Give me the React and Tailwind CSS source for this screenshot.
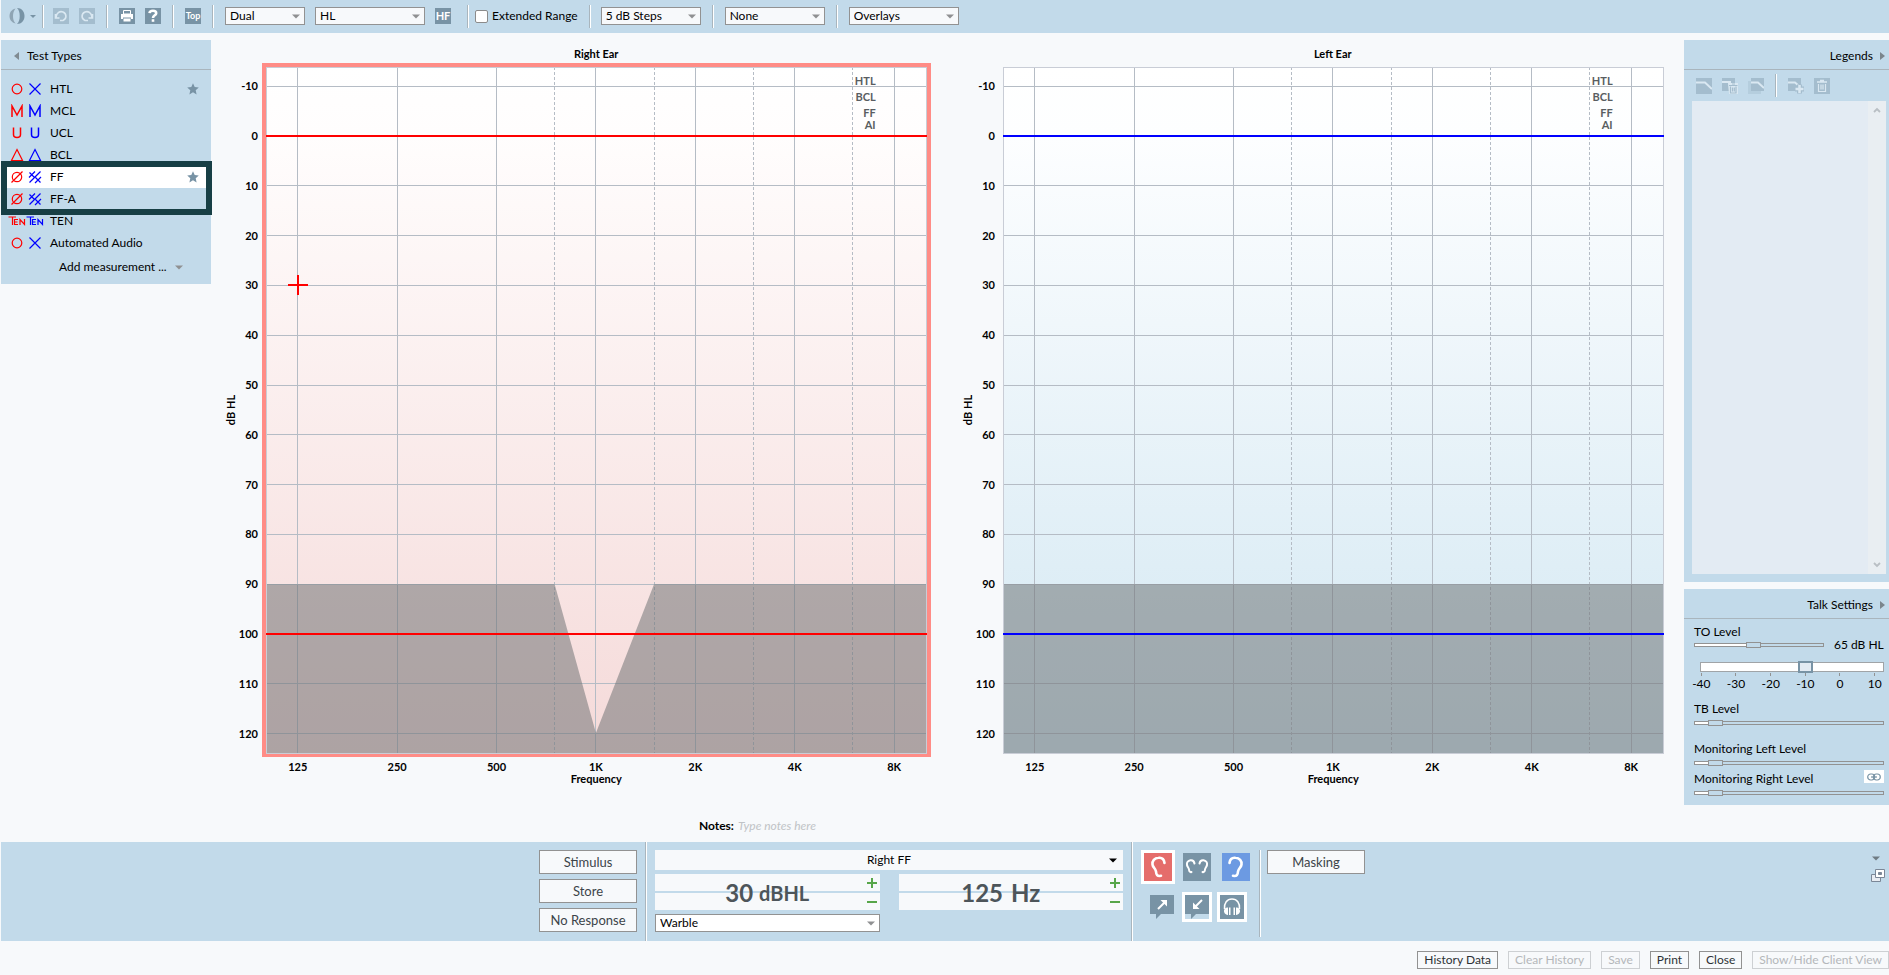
import React from "react";

const FREQS = ["125", "250", "500", "1K", "2K", "4K", "8K"];
const HALF_OCTAVES = [2.585, 3.585, 4.585, 5.585];
const LEVELS = [-10, 0, 10, 20, 30, 40, 50, 60, 70, 80, 90, 100, 110, 120];
const fx = (i) => `${4.8 + i * 15.05}%`;
const ly = (v) => `${2.8 + ((v + 10) / 10) * 7.26}%`;

function Divider() {
  return <div className="h-[23px] w-[2px] border-l border-r border-l-[#a9b5bd] border-r-white" />;
}

function Caret({ className = "" }) {
  return (
    <svg className={className} width="8" height="5" viewBox="0 0 8 5" aria-hidden="true">
      <path d="M0 0.5H8L4 4.5Z" fill="currentColor" />
    </svg>
  );
}

function Select({ label, value, className, box = "bg-[#f7f9fb]" }) {
  return (
    <div className={`relative ${className}`}>
      <select
        aria-label={label}
        defaultValue={value}
        className={`block h-[18px] w-full appearance-none border border-[#929292] pl-1 text-xs leading-4 text-black ${box}`}
      >
        <option>{value}</option>
      </select>
      <Caret className="pointer-events-none absolute top-[7px] right-[5px] text-[#8f9092]" />
    </div>
  );
}

function Tile({ label, faded, children }) {
  return (
    <button aria-label={label} className={`flex h-4 w-4 items-center justify-center bg-[#7893a5] ${faded ? "opacity-40" : ""}`}>
      {children}
    </button>
  );
}

function Toolbar() {
  return (
    <header className="ml-px flex h-[33px] items-center bg-[#c2daea] pb-px">
      <button aria-label="Module" className="ml-2 flex items-center gap-1 text-[#7893a5]">
        <svg width="17" height="16" viewBox="0 0 17 16" aria-hidden="true">
          <path d="M6.5 0.5C2.5 1.5 0.5 4.5 0.5 8S2.5 14.5 6.5 15.5C4.5 13 4 11 4 8S4.800 3 6.5 0.5Z" fill="#8fa5b4" />
          <path d="M8 0C12.5 0 15.5 3.5 15.5 8S12.5 16 8 16C10 14 10.7 11.5 10.7 8S10 2 8 0Z" fill="#7893a5" />
        </svg>
        <Caret className="w-[6px]" />
      </button>
      <div className="ml-[6px]"><Divider /></div>
      <div className="ml-[9px] flex gap-[10px]">
        <Tile label="Undo" faded>
          <svg width="16" height="16" viewBox="0 0 16 16" fill="none" stroke="#fff" strokeWidth="1.6" aria-hidden="true">
            <path d="M2.5 6V10H6.5M3 9.500C3.500 4.500 7 2.800 10 4C14 5.700 13.800 11 10 12.500H7" />
          </svg>
        </Tile>
        <Tile label="Redo" faded>
          <svg width="16" height="16" viewBox="0 0 16 16" fill="none" stroke="#fff" strokeWidth="1.6" aria-hidden="true">
            <path d="M13.5 6V10H9.5M13 9.500C12.500 4.500 9 2.800 6 4C2 5.700 2.200 11 6 12.500H9" />
          </svg>
        </Tile>
      </div>
      <div className="ml-[11px]"><Divider /></div>
      <div className="ml-[11px] flex gap-[10px]">
        <Tile label="Print">
          <svg width="16" height="16" viewBox="0 0 16 16" aria-hidden="true">
            <path d="M4.5 2.5H11.5V6H4.5Z" fill="#7893a5" stroke="#fff" />
            <path d="M2 6H14V11H12V9.5H4V11H2Z" fill="#fff" />
            <path d="M4.5 10.500V13.500H11.5V10.500Z" fill="#fff" />
          </svg>
        </Tile>
        <Tile label="Help">
          <svg width="16" height="16" viewBox="0 0 16 16" fill="none" stroke="#fff" strokeWidth="2.600" aria-hidden="true">
            <path d="M4.5 5.2C4.8 2 11.2 2 11.2 5.200C11.2 7.400 8 7.200 8 10" />
            <path d="M8 11.200V13.800" />
          </svg>
        </Tile>
      </div>
      <div className="ml-[11px]"><Divider /></div>
      <button className="ml-[11px] flex h-4 w-4 items-center justify-center overflow-hidden bg-[#7893a5] text-[9px] font-bold text-white">Top</button>
      <div className="ml-[11px]"><Divider /></div>
      <Select label="View" value="Dual" className="ml-[11px] w-20" />
      <Select label="Scale" value="HL" className="ml-[10px] w-[110px]" />
      <button className="ml-[10px] flex h-4 w-4 items-center justify-center bg-[#7893a5] text-[11px] font-bold text-white">HF</button>
      <div className="ml-[16px]"><Divider /></div>
      <label className="ml-[6px] flex items-center gap-1 text-xs">
        <input type="checkbox" className="h-[13px] w-[13px] appearance-none rounded-[2px] border border-[#8b8b8b] bg-white" />
        Extended Range
      </label>
      <div className="ml-[11px]"><Divider /></div>
      <Select label="Step size" value="5 dB Steps" className="ml-[10px] w-[100px]" />
      <div className="ml-[11px]"><Divider /></div>
      <Select label="Filter" value="None" className="ml-[11px] w-[100px]" />
      <div className="ml-[11px]"><Divider /></div>
      <Select label="Overlays" value="Overlays" className="ml-[11px] w-[110px]" />
    </header>
  );
}

const SHAPES = {
  circle: <circle cx="8" cy="7" r="4.8" />,
  cross: <path d="M2.5 1.500L13.5 12.5M13.5 1.500L2.5 12.5" />,
  m: <path d="M3 13V2L8 11L13 2V13" strokeWidth="1.5" />,
  u: <path d="M4.5 1.5V8.5C4.5 12.5 11.5 12.5 11.5 8.5V1.5" strokeWidth="1.5" />,
  triangle: <path d="M8 1.5L13.5 12.5H2.5Z" />,
  slashed: (
    <>
      <circle cx="8" cy="7" r="4.700" />
      <path d="M2.5 12.5L13.5 1.5" />
    </>
  ),
  hatch: (
    <path d="M2.5 12.5L13.5 1.5M2.5 2.5L7.5 7.5M8 1.5L2 7.5M8.500 7.500L13.500 12.500M14 7L8 13" />
  ),
};

function Mark({ shape, color }) {
  if (shape === "ten") {
    return (
      <svg width="18" height="14" viewBox="0 0 18 14" fill="none" stroke={color} strokeWidth="1.2" overflow="visible" aria-hidden="true">
        <path d="M0.500 3H8M4.500 3V11M10 5.5H6.500V10.5H10M6.500 8H9.500M12 11V5.5L16.500 10.5V5" />
      </svg>
    );
  }
  return (
    <svg width="18" height="14" viewBox="-1 0 18 14" fill="none" stroke={color} strokeWidth="1.2" aria-hidden="true">
      {SHAPES[shape]}
    </svg>
  );
}

const TESTS = [
  ["HTL", "circle", "cross", true],
  ["MCL", "m", "m"],
  ["UCL", "u", "u"],
  ["BCL", "triangle", "triangle"],
  ["FF", "slashed", "hatch", true],
  ["FF-A", "slashed", "hatch"],
  ["TEN", "ten", "ten"],
  ["Automated Audio", "circle", "cross"],
];

function TestTypes() {
  return (
    <aside className="relative ml-px h-[244px] w-[210px] shrink-0 bg-[#c2daea] text-xs">
      <h2 className="flex h-[30px] items-center gap-2 border-b border-[#a9b5bd] pt-[2px] pl-[13px]">
        <svg width="5" height="8" viewBox="0 0 5 8" aria-hidden="true"><path d="M5 0V8L0 4Z" fill="#808b92" /></svg>
        Test Types
      </h2>
      <ul className="pt-[8px]">
        {TESTS.map(([name, right, left, starred]) => (
          <li key={name}>
            <button className={`flex h-[22px] w-full items-center pl-[7px] text-left ${name === "FF" ? "bg-white" : ""}`}>
              <Mark shape={right} color="#ff0000" />
              <Mark shape={left} color="#0000ff" />
              <span className="ml-[6px] flex-1">{name}</span>
              {starred && (
                <svg className="mr-3" width="12" height="12" viewBox="0 0 12 12" aria-hidden="true">
                  <path d="M6 0.3L7.7 4.1L11.8 4.5L8.7 7.3L9.6 11.5L6 9.3L2.4 11.5L3.3 7.3L0.2 4.5L4.3 4.1Z" fill="#7893a5" />
                </svg>
              )}
            </button>
          </li>
        ))}
      </ul>
      <button className="ml-[58px] flex h-[26px] items-center gap-2">
        Add measurement ...
        <Caret className="text-[#8f9092]" />
      </button>
      <div className="pointer-events-none absolute top-[121px] left-0 h-[54px] w-[211px] border-[6px] border-[#173f45]" />
    </aside>
  );
}

function Audiogram({ title, side }) {
  const isRight = side === "right";
  const line = isRight ? "#ff0000" : "#0000ff";
  return (
    <section className="flex min-w-0 flex-1 flex-col pr-[21px] pl-[55px]">
      <h2 className="h-[27px] pt-[6px] text-center text-[11px] leading-4 font-bold">{title}</h2>
      <div className={`relative flex-1 ${isRight ? "outline-4 outline-[#ff8c86]" : ""}`}>
        <svg className="absolute inset-0 h-full w-full overflow-visible" role="img" aria-label={`${title} audiogram`}>
          <defs>
            <linearGradient id={`fill-${side}`} x1="0" y1="0" x2="0" y2="1">
              <stop offset="0" stopColor="#ffffff" />
              <stop offset="0.1" stopColor={isRight ? "#fffdfd" : "#fdfeff"} />
              <stop offset="1" stopColor={isRight ? "#f5dad9" : "#d2e7f2"} />
            </linearGradient>
          </defs>
          <rect width="100%" height="100%" fill={`url(#fill-${side})`} />
          <g stroke="#b5bcc5" shapeRendering="crispEdges">
            {LEVELS.map((v) => <line key={v} x1="0" x2="100%" y1={ly(v)} y2={ly(v)} />)}
            {FREQS.map((f, i) => <line key={f} x1={fx(i)} x2={fx(i)} y1="0" y2="100%" />)}
            {HALF_OCTAVES.map((o) => <line key={o} x1={fx(o)} x2={fx(o)} y1="0" y2="100%" strokeDasharray="3 2" />)}
          </g>
          <svg width="100%" height="100%" viewBox="0 0 100 100" preserveAspectRatio="none">
            <path
              d={isRight ? "M0 75.4H43.7L49.95 97.1L58.75 75.4H100V100H0Z" : "M0 75.4H100V100H0Z"}
              fill="#6e7274"
              fillOpacity="0.53"
            />
          </svg>
          <rect width="100%" height="100%" fill="none" stroke="#c9cdd6" shapeRendering="crispEdges" />
          <g stroke={line} strokeWidth="2" shapeRendering="crispEdges">
            <line x1="0" x2="100%" y1={ly(0)} y2={ly(0)} />
            <line x1="0" x2="100%" y1={ly(100)} y2={ly(100)} />
          </g>
          {isRight && (
            <svg x={fx(0)} y={ly(30)} overflow="visible">
              <path d="M-10 0H10M0 -10V10" stroke="#ff0000" strokeWidth="2" shapeRendering="crispEdges" />
            </svg>
          )}
          <g className="text-[11px] font-bold" textAnchor="end">
            {LEVELS.map((v) => <text key={v} x="-8" y={ly(v)} dy="4">{v}</text>)}
          </g>
          <g className="text-[11px] font-bold" textAnchor="middle">
            {FREQS.map((f, i) => <text key={f} x={fx(i)} y="100%" dy="18">{f}</text>)}
            <text x="50%" y="100%" dy="30">Frequency</text>
            <svg x="-31" y="50%" overflow="visible"><text transform="rotate(-90)">dB HL</text></svg>
          </g>
          <g className="text-[11px] font-bold" fill="#595d61" textAnchor="end">
            <text x="92.3%" y="18">HTL</text>
            <text x="92.3%" y="34">BCL</text>
            <text x="92.3%" y="50">FF</text>
            <text x="92.3%" y="62">AI</text>
          </g>
        </svg>
      </div>
      <div className="h-[52px]" />
    </section>
  );
}

function PanelTitle({ children }) {
  return (
    <h2 className="flex h-[30px] items-center justify-end gap-[7px] border-b border-[#a9b5bd] pt-[2px] pr-1">
      {children}
      <svg width="5" height="8" viewBox="0 0 5 8" aria-hidden="true"><path d="M0 0V8L5 4Z" fill="#7b858c" /></svg>
    </h2>
  );
}

function ThinSlider({ label, value, className = "" }) {
  return (
    <div className={`relative h-[6px] ${className}`}>
      <div className="absolute inset-x-0 top-[1px] h-1 border border-[#929292]">
        <div className="h-full bg-white" style={{ width: `${value}%` }} />
      </div>
      <input
        type="range"
        aria-label={label}
        defaultValue={value}
        className="absolute inset-0 h-[6px] w-full appearance-none bg-transparent [&::-webkit-slider-thumb]:h-[6px] [&::-webkit-slider-thumb]:w-[15px] [&::-webkit-slider-thumb]:appearance-none [&::-webkit-slider-thumb]:border [&::-webkit-slider-thumb]:border-[#929292] [&::-webkit-slider-thumb]:bg-[#c2daea]"
      />
    </div>
  );
}

function Legends() {
  return (
    <section className="flex flex-1 flex-col bg-[#c2daea]">
      <PanelTitle>Legends</PanelTitle>
      <div className="flex h-[31px] items-center pl-3">
        <button aria-label="Default legend" className="opacity-40">
          <svg width="16" height="16" viewBox="0 0 16 16" aria-hidden="true">
            <path d="M0 0H16V16H0Z" fill="#7893a5" /><path d="M0 4.5H9L16 11" fill="none" stroke="#fff" strokeWidth="2" />
          </svg>
        </button>
        <button className="ml-[10px] opacity-40" aria-label="Clear legend">
          <svg width="16" height="16" viewBox="0 0 16 16" aria-hidden="true">
            <path d="M0 0H13V13H0Z" fill="#7893a5" /><path d="M0 4H9" stroke="#fff" strokeWidth="2" />
            <path d="M6 5H16V16H7Z" fill="#fff" /><path d="M7 7.5H15.5M8.5 8.5V15H14V8.5M10 6H13M10.5 9.5V13.5M12.3 9.5V13.5" fill="none" stroke="#7893a5" strokeWidth="1.2" />
          </svg>
        </button>
        <button className="ml-[10px] opacity-40" aria-label="Copy legend">
          <svg width="16" height="16" viewBox="0 0 16 16" aria-hidden="true">
            <path d="M3 0H16V13H3Z" fill="#7893a5" /><path d="M0 3H3V13H13V16H0Z" fill="#7893a5" opacity="0.4" />
            <path d="M3 4.5H10L16 10" fill="none" stroke="#fff" strokeWidth="2" />
          </svg>
        </button>
        <div className="ml-[11px]"><Divider /></div>
        <button className="ml-[11px] opacity-40" aria-label="Add legend">
          <svg width="16" height="16" viewBox="0 0 16 16" aria-hidden="true">
            <path d="M0 0H13V13H0Z" fill="#7893a5" /><path d="M0 4.5H7L11 8" fill="none" stroke="#fff" strokeWidth="2" />
            <path d="M11.5 6.5V15.500M7 11H16" stroke="#7893a5" strokeWidth="5" /><path d="M11.5 7V15M7.5 11H15.5" stroke="#fff" strokeWidth="2.5" />
          </svg>
        </button>
        <button className="ml-[10px] opacity-40" aria-label="Delete legend">
          <svg width="16" height="16" viewBox="0 0 16 16" fill="none" stroke="#fff" aria-hidden="true">
            <path d="M0 0H16V16H0Z" fill="#7893a5" stroke="none" />
            <path d="M3 4H13M6 2.5H10" strokeWidth="1.5" /><path d="M4.5 6V13.5H11.5V6M7 6.5V11.5M9 6.5V11.5" strokeWidth="1.2" />
          </svg>
        </button>
      </div>
      <div className="mr-[3px] mb-2 ml-2 flex flex-1 justify-end bg-[#e3ebf3]">
        <div className="flex w-[18px] flex-col items-center justify-between bg-[#e9eef2] py-[6px] text-[#b9bfc4]">
          <svg width="8" height="6" viewBox="0 0 8 6" fill="none" stroke="currentColor" strokeWidth="1.8" aria-hidden="true"><path d="M1 5L4 2L7 5" /></svg>
          <svg width="8" height="6" viewBox="0 0 8 6" fill="none" stroke="currentColor" strokeWidth="1.8" aria-hidden="true"><path d="M1 1L4 4L7 1" /></svg>
        </div>
      </div>
    </section>
  );
}

function TalkSettings() {
  return (
    <section className="h-[216px] bg-[#c2daea]">
      <PanelTitle>Talk Settings</PanelTitle>
      <div className="pr-[5px] pl-[10px]">
        <div className="pt-[5px] leading-4">TO Level</div>
        <div className="flex h-[10px] items-center">
          <ThinSlider label="TO Level" value={45} className="w-[130px]" />
          <span className="ml-[10px] whitespace-nowrap">65 dB HL</span>
        </div>
        <div className="relative mt-[11px] ml-[6px] h-[12px]">
          <div className="absolute inset-x-0 top-[1px] h-[10px] border border-[#a0a4a7] bg-white" />
          <input
            type="range"
            aria-label="TO meter"
            defaultValue={58}
            className="absolute inset-0 h-[12px] w-full appearance-none bg-transparent [&::-webkit-slider-thumb]:h-[12px] [&::-webkit-slider-thumb]:w-[15px] [&::-webkit-slider-thumb]:appearance-none [&::-webkit-slider-thumb]:border-2 [&::-webkit-slider-thumb]:border-[#7893a5] [&::-webkit-slider-thumb]:bg-[#e3ebf3]"
          />
        </div>
        <div className="-mr-2 -ml-[10px] grid grid-cols-6">
          {[-40, -30, -20, -10, 0, 10].map((n) => (
            <div key={n} className="flex flex-col items-center">
              <span className="h-[3px] w-px bg-[#929292]" />
              <span className="leading-4">{n}</span>
            </div>
          ))}
        </div>
        <div className="mt-[9px] leading-4">TB Level</div>
        <ThinSlider label="TB Level" value={8} className="mt-[3px]" />
        <div className="mt-[15px] leading-4">Monitoring Left Level</div>
        <ThinSlider label="Monitoring Left Level" value={8} className="mt-[3px]" />
        <div className="mt-[4px] flex h-[18px] justify-between">
          <span className="pt-px leading-4">Monitoring Right Level</span>
          <button aria-label="Link levels" className="flex h-[13px] w-5 items-center justify-center bg-white">
            <svg width="14" height="8" viewBox="0 0 14 8" fill="none" stroke="#7893a5" strokeWidth="1.2" aria-hidden="true">
              <rect x="0.7" y="1" width="7" height="6" rx="3" /><rect x="6.3" y="1" width="7" height="6" rx="3" /><path d="M4 4H10" />
            </svg>
          </button>
        </div>
        <ThinSlider label="Monitoring Right Level" value={8} className="mt-[2px]" />
      </div>
    </section>
  );
}

function Stepper({ value, unit, small }) {
  return (
    <div className="relative grid h-9 flex-1 grid-rows-2 gap-[2px]">
      <button aria-label={`Increase ${unit}`} className="flex items-center justify-end bg-[#f7f9fb] pr-[3px]">
        <svg width="10" height="10" viewBox="0 0 10 10" aria-hidden="true"><path d="M5 0V10M0 5H10" stroke="#57a64a" strokeWidth="2" /></svg>
      </button>
      <button aria-label={`Decrease ${unit}`} className="flex items-center justify-end bg-[#f7f9fb] pr-[3px]">
        <svg width="10" height="2" viewBox="0 0 10 2" aria-hidden="true"><path d="M0 1H10" stroke="#57a64a" strokeWidth="2" /></svg>
      </button>
      <div
        className={`pointer-events-none absolute inset-0 flex items-center justify-center pt-px text-2xl font-bold text-[#4d555a] ${small ? "gap-[6px]" : "gap-2 pr-5"}`}
      >
        {value}
        <span className={small ? "text-xl" : ""}>{unit}</span>
      </div>
    </div>
  );
}

function EarButtons() {
  return (
    <div className="flex w-[126px] flex-col gap-2 pt-2 pl-2">
      <div className="flex h-[34px] gap-[5px]">
        <button aria-label="Right ear" className="border-[3px] border-white bg-[#e56d6b]">
          <svg width="28" height="28" viewBox="0 0 28 28" fill="none" stroke="#fff" strokeWidth="2.6" strokeLinecap="round" aria-hidden="true">
            <path d="M20.5 10C20 6 17.5 4.5 14.5 4.8C10.5 5 8 8 8.5 11.5C8.8 14.5 11.5 15.5 12 18.5C12.2 21.500 13 23.5 17 22.8" />
          </svg>
        </button>
        <button aria-label="Both ears" className="m-[3px] bg-[#7893a5]">
          <svg width="28" height="28" viewBox="0 0 28 28" fill="none" stroke="#fff" strokeWidth="2" strokeLinecap="round" aria-hidden="true">
            <path d="M11.5 10.5C11 7.5 9 7 7.5 7.200C5 7.5 3.5 9.5 4 12C4.3 14 5.8 14.5 6 16.5C6.2 18.5 7 19.5 8.5 19" />
            <path d="M16.5 10.5C17 7.5 19 7 20.5 7.2C23 7.5 24.5 9.5 24 12C23.7 14 22.2 14.5 22 16.5C21.8 18.5 21 19.5 19.5 19" />
          </svg>
        </button>
        <button aria-label="Left ear" className="m-[3px] bg-[#6c9ae2]">
          <svg width="28" height="28" viewBox="0 0 28 28" fill="none" stroke="#fff" strokeWidth="2.6" strokeLinecap="round" aria-hidden="true">
            <path d="M7.5 10C8 6 10.5 4.5 13.5 4.8C17.5 5 20 8 19.5 11.5C19.2 14.5 16.5 15.5 16 18.5C15.8 21.5 15 23.5 11 22.8" />
          </svg>
        </button>
      </div>
      <div className="ml-[6px] flex gap-[5px]">
        <button aria-label="Talk forward" className="m-[3px]">
          <svg width="24" height="24" viewBox="0 0 24 24" aria-hidden="true">
            <path d="M0 0H24V19H11L6 24V19H0Z" fill="#7893a5" />
            <path d="M8 14L15 7" stroke="#fff" strokeWidth="2" /><path d="M10.5 5H17V11.5Z" fill="#fff" />
          </svg>
        </button>
        <button aria-label="Talk back" className="border-[3px] border-white">
          <svg width="24" height="24" viewBox="0 0 24 24" aria-hidden="true">
            <path d="M0 0H24V19H11L6 24V19H0Z" fill="#7893a5" />
            <path d="M17 5L10 12" stroke="#fff" strokeWidth="2" /><path d="M8 7.5V14H14.5Z" fill="#fff" />
          </svg>
        </button>
        <button aria-label="Monitor" className="border-[3px] border-white bg-[#7893a5]">
          <svg width="24" height="24" viewBox="0 0 24 24" aria-hidden="true">
            <path d="M4.5 14C4 8 7 4 12 4S20 8 19.5 14" fill="none" stroke="#fff" strokeWidth="1.5" />
            <path d="M8 12.5C4.5 12.5 4 15 4 16S4.5 19.5 8 20ZM9 12.5H10.5V20H9ZM16 12.5C19.5 12.5 20 15 20 16S19.5 19.5 16 20ZM13.5 12.5H15V20H13.5Z" fill="#fff" />
          </svg>
        </button>
      </div>
    </div>
  );
}

function Action({ children }) {
  return <button className="block h-6 w-[98px] border border-[#929292] bg-[#f7f9fb] text-[13px] leading-4 text-[#3c4449]">{children}</button>;
}

function ControlBar() {
  return (
    <section className="ml-px flex h-[99px] bg-[#c2daea]">
      <div className="flex-1 pl-[18px]" />
      <div className="flex flex-col gap-[5px] py-2 pr-2">
        <Action>Stimulus</Action>
        <Action>Store</Action>
        <Action>No Response</Action>
      </div>
      <div className="w-[2px] border-l border-r border-l-[#a9b5bd] border-r-white" />
      <div className="flex w-[484px] flex-col gap-1 px-2 pt-2">
        <button className="flex h-5 items-center bg-[#f7f9fb] pr-[6px] pl-[14px] text-xs">
          <span className="flex-1 text-center">Right FF</span>
          <Caret />
        </button>
        <div className="flex gap-[19px]">
          <Stepper value="30" unit="dBHL" small />
          <Stepper value="125" unit="Hz" />
        </div>
        <Select label="Stimulus type" value="Warble" className="w-[225px]" box="bg-white" />
      </div>
      <div className="w-[2px] border-l border-r border-l-[#a9b5bd] border-r-white" />
      <EarButtons />
      <div className="mt-2 mb-1 w-[2px] border-l border-r border-l-[#a9b5bd] border-r-white" />
      <div className="py-2 pl-[6px]"><Action>Masking</Action></div>
      <div className="flex flex-1 flex-col items-end gap-2 pt-[14px] pr-1">
        <button aria-label="Collapse" className="mr-[5px] flex"><Caret className="text-[#6f7b83]" /></button>
        <button aria-label="Undock">
          <svg width="14" height="13" viewBox="0 0 14 13" fill="#e8ecf2" stroke="#7b8797" aria-hidden="true">
            <path d="M0.5 5.5H9.5V12.5H0.5Z" /><path d="M4.5 0.5H13.5V8.5H4.5Z" fill="#fff" /><path d="M7.5 3.5H10.5V5.5H7.5Z" fill="#7b8797" />
          </svg>
        </button>
      </div>
    </section>
  );
}

const FOOTER = [
  ["History Data", false],
  ["Clear History", true],
  ["Save", true],
  ["Print", false],
  ["Close", false],
  ["Show/Hide Client View", true],
];

export default function App() {
  return (
    <div className="flex min-h-screen flex-col bg-[#f7f9fb] font-['Lato',sans-serif] text-black">
      <Toolbar />
      <main className="flex flex-1 pt-[7px]">
        <TestTypes />
        <div className="flex min-w-0 flex-1">
          <Audiogram title="Right Ear" side="right" />
          <Audiogram title="Left Ear" side="left" />
        </div>
        <aside className="flex w-[205px] shrink-0 flex-col gap-[7px] text-xs">
          <Legends />
          <TalkSettings />
        </aside>
      </main>
      <label className="flex h-[37px] items-center gap-1 pt-[5px] pl-[37%] text-xs font-bold">
        Notes:
        <input placeholder="Type notes here" className="bg-transparent font-normal italic placeholder:text-[#c0c3c6]" />
      </label>
      <ControlBar />
      <footer className="flex h-[34px] items-center justify-end gap-[10px] pt-1 text-xs">
        {FOOTER.map(([name, off]) => (
          <button
            key={name}
            disabled={off}
            className={`h-[18px] border px-[6px] leading-4 ${off ? "border-[#cdd0d3] text-[#b4b7ba]" : "border-[#929292] text-[#2d3236]"}`}
          >
            {name}
          </button>
        ))}
      </footer>
    </div>
  );
}
